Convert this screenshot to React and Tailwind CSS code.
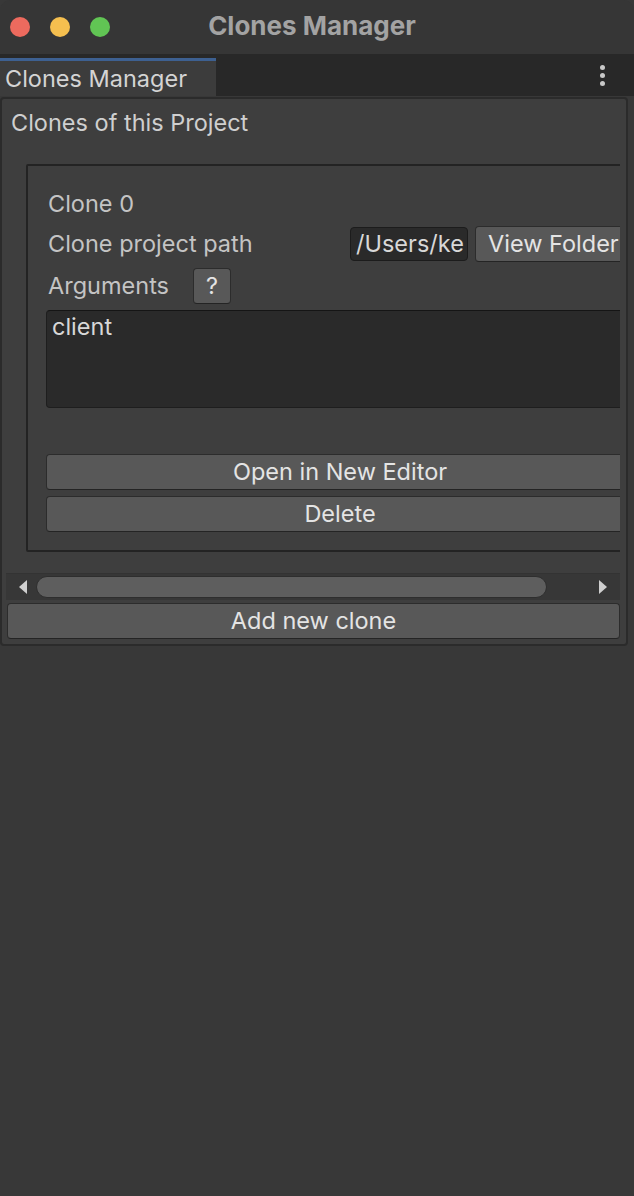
import React from "react";

function Btn({ children, className = "" }) {
  return (
    <div
      className={
        "flex items-center justify-center whitespace-nowrap rounded-[4px] border border-[#2c2c2c] border-b-[#242424] bg-[#585858] text-[#e4e4e4] " +
        className
      }
    >
      {children}
    </div>
  );
}

export default function App() {
  return (
    <div
      className="flex h-[1196px] w-[634px] flex-col overflow-hidden bg-[#383838]"
      style={{ fontFamily: "Inter, 'Noto Sans', sans-serif" }}
    >
      {/* title bar */}
      <div className="grid h-[54px] grid-cols-[1fr_auto_1fr] items-center rounded-t-[10px] bg-[#363636]">
        <div className="flex items-center gap-[20px] pl-[10px]">
          <span className="h-[20px] w-[20px] rounded-full bg-[#ed6a5e]" />
          <span className="h-[20px] w-[20px] rounded-full bg-[#f5bf4f]" />
          <span className="h-[20px] w-[20px] rounded-full bg-[#61c554]" />
        </div>
        <div className="pb-[4px] pr-[10px] text-[26px] font-bold text-[#a3a3a3]">Clones Manager</div>
        <div />
      </div>

      {/* tab bar */}
      <div className="flex h-[42px] items-end justify-between bg-[#282828]">
        <div className="flex h-[38px] w-[216px] items-center border-t-[3px] border-[#3d6091] bg-[#3c3c3c] pl-[5px] text-[23.5px] text-[#d4d4d4]">
          Clones Manager
        </div>
        <div className="mr-[29px] flex h-full flex-col items-center justify-center gap-[3px]">
          <span className="h-[5px] w-[5px] rounded-full bg-[#c8c8c8]" />
          <span className="h-[5px] w-[5px] rounded-full bg-[#c8c8c8]" />
          <span className="h-[5px] w-[5px] rounded-full bg-[#c8c8c8]" />
        </div>
      </div>

      {/* panel */}
      <div className="mt-[1px] mr-[6px] rounded-[4px] border-2 border-[#2b2b2b] bg-[#3e3e3e] pb-[5px]">
        <div className="pl-[9px] pt-[11px] text-[23.5px] leading-[26px] text-[#cfcfcf]">
          Clones of this Project
        </div>

        {/* scroll view */}
        <div className="ml-[4px] mt-[28px] w-[614px] overflow-hidden">
          <div className="w-[630px] pb-[21px] pl-[20px]">
            <div className="rounded-[2px] border-2 border-[#232323] pb-[18px] pl-[18px] pt-[25px] text-[23.5px]">
              <div className="pl-[2px] leading-[26px] text-[#c4c4c4]">Clone 0</div>

              <div className="mt-[8px] flex h-[38px] items-center leading-[28px]">
                <div className="w-[304px] shrink-0 pl-[2px] text-[#c4c4c4]">Clone project path</div>
                <div className="flex h-[34px] w-[118px] shrink-0 items-center overflow-hidden whitespace-nowrap rounded-[4px] border border-[#1c1c1c] bg-[#2a2a2a] pl-[5px] text-[#d8d8d8]">
                  /Users/ke
                </div>
                <Btn className="ml-[7px] h-[36px] w-[170px] shrink-0 justify-start pl-[12px]">View Folder</Btn>
              </div>

              <div className="mt-[4px] flex h-[38px] items-center leading-[28px]">
                <div className="w-[147px] pl-[2px] text-[#c4c4c4]">Arguments</div>
                <Btn className="h-[36px] w-[38px]">?</Btn>
              </div>

              <div className="mt-[5px] h-[98px] rounded-[4px] border border-[#1e1e1e] border-t-[#151515] bg-[#2a2a2a] pl-[5px] pt-[2px] leading-[28px] text-[#d8d8d8]">
                client
              </div>

              <Btn className="mt-[46px] h-[36px] leading-[28px]">Open in New Editor</Btn>
              <Btn className="mt-[6px] h-[36px] leading-[28px]">Delete</Btn>
            </div>
          </div>
        </div>

        {/* horizontal scrollbar */}
        <div className="ml-[4px] flex h-[27px] w-[614px] items-center border-t border-[#333333] bg-[#373737]">
          <svg width="10" height="14" viewBox="0 0 10 14" className="ml-[12px]">
            <polygon points="9,0 9,14 1,7" fill="#cfcfcf" />
          </svg>
          <div className="ml-[8px] h-[22px] w-[511px] rounded-full border border-[#2e2e2e] bg-[#5e5e5e]" />
          <div className="flex-1" />
          <svg width="10" height="14" viewBox="0 0 10 14" className="mr-[12px]">
            <polygon points="1,0 1,14 9,7" fill="#cfcfcf" />
          </svg>
        </div>

        <Btn className="ml-[5px] mt-[3px] h-[36px] w-[613px] text-[23.5px] leading-[28px]">Add new clone</Btn>
      </div>
    </div>
  );
}
